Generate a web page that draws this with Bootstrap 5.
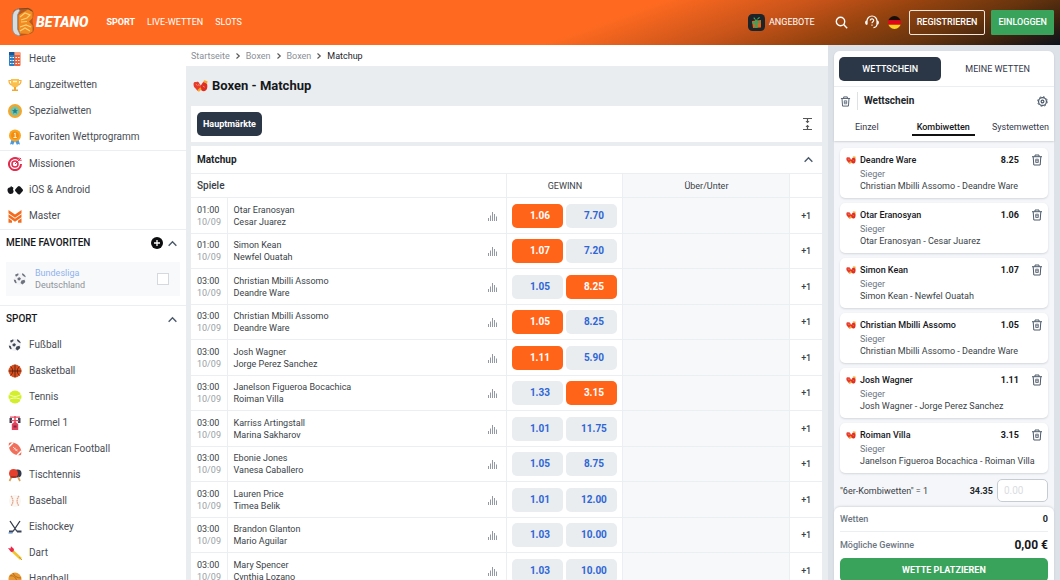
<!DOCTYPE html>
<html lang="de">
<head>
<meta charset="utf-8">
<meta name="viewport" content="width=device-width, initial-scale=1">
<title>Betano – Boxen Matchup</title>
<link href="https://cdn.jsdelivr.net/npm/bootstrap@5.3.0/dist/css/bootstrap.min.css" rel="stylesheet">
<style>
:root{--orange:#ff6419;--navy:#2b3746;--green:#3aa35b;--line:#eceff2;--ink:#16181c;--blue:#2f66d6}
body{font-family:Roboto,"Liberation Sans",sans-serif;font-size:9px;line-height:12px;color:#3a3f47;background:#e9edf0}
a{text-decoration:none;color:inherit}
button{font-family:inherit;line-height:12px}
svg{display:block;flex:none}
.ic{width:14px;height:14px}
.topbar{height:45px;padding:0 6px 1px;color:#fff;background:linear-gradient(160deg,#ff6a20 56%,#c9541a 69%,#96430f 78%,#67340e 87%,#39210f 94%,#0c131c 100%)}
.brand{font-size:14px;line-height:16px;font-weight:900;font-style:italic}
.topnav{gap:12px;margin-left:18px}
.topbtn{height:25px;padding:0 7px;font-size:9px;font-weight:500;color:#fff;border:1px solid #f3e6dc;background:none;border-radius:2px}
.topbtn.login{margin-left:6px;padding:0 6px;background:var(--green);border-color:var(--green);border-radius:1px}
.side{width:186px;padding-top:1px;background:#fff}
.side .entry{height:26px;padding-left:8px;gap:7px;font-size:10px;color:#4a4e55}
.side .group{height:26px;padding:0 8px 0 6px;font-size:10px;font-weight:500;color:var(--ink)}
.rule{border-top:1px solid var(--line)}
.fav{height:34px;margin:6px 6px 9px;padding:0 11px 0 7px;gap:8px;background:#f8f9fb;color:#8d9299}
.fav .tick{width:12px;height:12px;margin:0;border:1px solid #d5d8dc;border-radius:0}
.crumbs{height:21px;padding-left:5px;gap:5px;color:#8a8f96}
.center{padding:0 6px 0 5px}
.title{font-size:13px;line-height:16px;color:var(--ink);height:40px;padding-left:2px;gap:4px}
.panel{background:#fff}
.bar{height:36px;padding:0 8px 0 6px}
.chip{height:24px;padding:0 6px;background:var(--navy);color:#fff;font-size:9px;font-weight:700;border:0;border-radius:5px}
.subhead{font-size:10px;line-height:12px}
.sect{height:27px;padding:0 8px 0 6px}
.games{table-layout:fixed;width:100%;border-collapse:collapse}
.games th{height:24px;font-weight:400;border:solid var(--line);border-width:1px 1px 1px 0;padding:0}
.games th:first-child,.games td:first-child{padding-left:6px}
.games th:last-child,.games td:last-child{border-right:0}
.games td{height:35px;border:solid var(--line);border-width:0 1px 1px 0;padding:0}
.games tr:nth-child(odd) td{height:36px}
.games .shade{background:#f7f8fa}
.games .pair{padding:0 8px 0 6px}
.c-time{width:36px}.c-odds{width:116px}.c-ou{width:167px}.c-more{width:32px}
.odd{width:51px;height:24px;border:0;border-radius:5px;background:#e9edf0;color:var(--blue);font-size:10px;font-weight:700;padding:0 0 0 4px}
.odd.on{background:var(--orange);color:#fff}
.slipcol{width:232px;background:#dde2e9;padding:6px 6px 0}
.slip{background:#f4f6f9;border-radius:6px 6px 0 0}
.slip .head{padding-bottom:5px;background:#fff;border-radius:6px 6px 0 0;box-shadow:0 1px 2px rgba(60,70,90,.2)}
.pills{height:35px;padding:0 5px;gap:5px}
.pill{flex:1;height:24px;border:0;border-radius:5px;font-size:9px;background:none;color:#33384a}
.pill.on{background:var(--navy);color:#fff;font-weight:500}
.slipbar{height:29px;padding:0 6px;gap:6px}
.kind{background:none;border:0;border-bottom:2px solid transparent;padding:0 5px 1px;height:16px;font-size:9px;color:#33384a}
.kind.on{border-color:#111;font-weight:500;color:var(--ink)}
.bet{height:50px;margin-bottom:5px;padding:6px 5px 0 6px;background:#fff;border-radius:5px;box-shadow:0 1px 2px rgba(60,70,90,.18)}
.bet .who{font-weight:500;color:var(--ink)}
.bet .ic{width:10px;height:10px}
.bet .info{padding:2px 0 0 14px}
.ghost{border:0;background:none;padding:0;color:#4d5a6b}
.muted{color:#6c7683}
.stake{width:51px;height:23px;padding:0 6px;font-size:10px;border:1px solid #c6ccd4;border-radius:5px;background:#fff}
.stake::placeholder{color:#dadde2}
.foot{background:#fff;border-radius:6px 6px 0 0;padding:0 6px;box-shadow:0 -1px 2px rgba(60,70,90,.15)}
.place{height:24px;width:100%;border:0;border-radius:5px;background:var(--green);color:#fff;font-size:9px;font-weight:700}
.sum{font-size:12px;font-weight:700;color:var(--ink)}
</style>
</head>
<body class="vh-100 overflow-hidden d-flex flex-column">

<svg width="0" height="0" class="position-absolute" aria-hidden="true">
  <symbol id="up" viewBox="0 0 10 10"><path d="M1.500 7 5 3.500 8.500 7" fill="none" stroke="currentColor" stroke-width="1.300"/></symbol>
  <symbol id="next" viewBox="0 0 6 8"><path d="M1.500 1.500 4.300 4 1.500 6.500" fill="none" stroke="#555" stroke-width="1.100"/></symbol>
  <symbol id="trash" viewBox="0 0 12 12"><g fill="none" stroke="currentColor"><path d="M1 2.700h10M4 2.500V1h4v1.500M2.200 3l.6 8h6.400l.6-8"/><path d="M4.700 5.200h2.600v3.300H4.700zM4.700 6.800h2.600" stroke-width=".8"/></g></symbol>
  <symbol id="bars" viewBox="0 0 10 10"><path d="M.5 10V7M2.500 10V4.500M4.500 10V1M6.500 10V3M8.500 10V5.500" stroke="#9299a4" fill="none"/></symbol>
  <symbol id="glove" viewBox="0 0 16 14"><path d="M.6 4.500C.8 2.800 2.200 2.300 3.400 3 4.400 2 6.300 2.500 6.800 4.200L8 6l.6 4-3 2.500C4 12 3.500 10.500 2.500 9.500 1.200 8.300.4 6.500.6 4.500z" fill="#e63a2b"/><path d="M8 6.500C9.500 6 9.600 3.600 11.300 2.800l3 .6c1.300 2 1.200 4.600.6 6.600-.8 2.400-3.600 3.200-5.700 1.800C7.800 10.800 7.500 8 8 6.500z" fill="#df2f20"/><path d="M10.800 2.200 12 .8l3.500 1-.6 3zM4.500 11.500 7.800 8.200l1.400 2.200-2.800 2.800z" fill="#f8a826"/><path d="M3 5 4.800 6.500M10.500 7l2 1.300M6 5l.6 2" stroke="#ff8f70" fill="none"/></symbol>
  <symbol id="ball" viewBox="0 0 14 14"><circle cx="7" cy="7" r="6" fill="#f1f2f5"/><path d="M2 2.800 5.200 1.200 5.500 3 3 4.700zM9 1.300c2 .5 3.300 2 3.800 4L11 4.600 9.200 3zM8.500 8.500l3-.8.8 2.300-2.800 2.500-2-1.500zM.8 7.500 2.700 8l1 3-1 .2C1.500 10.200.9 9 .8 7.500zM4.500 6l2.200-.8L8 6.800 6.500 8.500 4.700 8z" fill="#3f4654"/></symbol>
</svg>

<header class="topbar d-flex align-items-center flex-shrink-0">
  <a href="#" class="d-flex align-items-center ps-1" aria-label="Betano">
    <svg width="26" height="30" viewBox="-1 0 26 30"><path d="M7 1.500 17 1c4 .5 6 3 5.500 7l-1 6 1.500 7c.5 3-1 5-4 6L9 29l-5-2L1 22V8l2-5z" fill="#b85a1e"/><path d="M8 2 5 3C2.500 4.500 1.500 7 1.500 10v11c0 3 1 5 3 6.500L8 29l1-1.500L6.500 22V8L9 3z" fill="#d9dcdd" stroke="#87929a" stroke-width=".8"/><path d="M7.500 8 17 2.500l4.500 2v6.500L18 14.500l3.500 4v6l-4 2.500L9 26.500l-1.500-5z" fill="#f08a22"/><path d="M9 10l5-4 5 2-3 3-6 2M9 20l6-2 5 2M9 24l5-3 5 3M10 15l6-.5" stroke="#ffcf70" fill="none" stroke-width="1.200"/><path d="M8 2l9-.6 4.500 3" stroke="#7a4a2a" fill="none"/></svg>
    <span class="brand">BETANO</span>
  </a>
  <nav class="topnav d-flex">
    <a href="#" class="fw-bold">SPORT</a><a href="#">LIVE-WETTEN</a><a href="#">SLOTS</a>
  </nav>
  <div class="ms-auto d-flex align-items-center">
    <a href="#" class="d-flex align-items-center gap-1 me-3">
      <svg width="17" height="17" viewBox="0 0 17 17"><rect width="17" height="17" rx="4.500" fill="#1c2329"/><path d="M4 7l9-1v7.500L5 14z" fill="#e4601f"/><path d="M7 6h2.500v8H7zM4 8l9-.8v1.400L4 9.400z" fill="#31a661"/><path d="M8 6C5 5 5 3 6.500 3.500L8 6l3-3c1.500 0 1 2-3 3z" fill="#3cab60"/></svg>
      <span>ANGEBOTE</span></a>
    <button class="ghost ms-1 me-3" aria-label="Suche"><svg width="13" height="13" viewBox="0 0 13 13" fill="none" stroke="#fff" stroke-width="1.400"><circle cx="5.500" cy="5.500" r="4.200"/><path d="m8.600 8.600 3.600 3.600"/></svg></button>
    <button class="ghost me-2" aria-label="Hilfe"><svg width="16" height="14" viewBox="0 0 16 14" fill="none" stroke="#fff" stroke-width="1.200"><path d="M3 9.500V6a5 5 0 0 1 10 0v3.500c-.3 2-1.300 3-3.500 3.200M3 5.800C1.200 6 1.200 9.200 3 9.400M13 5.800c1.800.2 1.800 3.400 0 3.600M6.300 5.500c0-2.200 3.500-2 3.400 0C9.600 6.800 8 6.700 8 8.300M8 9.500v1.300"/></svg></button>
    <svg width="13" height="13" viewBox="0 0 13 13" class="me-2"><clipPath id="r"><circle cx="6.500" cy="6.500" r="6.500"/></clipPath><g clip-path="url(#r)"><path fill="#1a0d08" d="M0 0h13v4.300H0z"/><path fill="#e3061a" d="M0 4.300h13v4.400H0z"/><path fill="#ffd21f" d="M0 8.700h13V13H0z"/></g></svg>
    <button class="topbtn">REGISTRIEREN</button>
    <button class="topbtn login">EINLOGGEN</button>
  </div>
</header>

<div class="d-flex flex-grow-1 overflow-hidden">
  <aside class="side flex-shrink-0 overflow-hidden">
    <a href="#" class="entry d-flex align-items-center"><svg class="ic" viewBox="0 0 14 14"><rect x="1" y="0" width="6" height="14" rx="1" fill="#2f7fc4"/><rect x="6.500" y="0" width="6" height="14" rx="1" fill="#f0623a"/><path d="M1 0h5.500v3H1z" fill="#1b5796"/><path d="M6.500 0h5.500v3H6.500z" fill="#f9a07c"/><path d="M2 5.500h1.500M4.500 5.500H6M2 8.500h1.500M4.500 8.500H6M2 11.500h1.500M4.500 11.500H6M7.500 5.500H9M10 5.500h1.500M7.500 8.500H9M10 8.500h1.500M7.500 11.500H9M10 11.500h1.500" stroke="#fff" stroke-width="1"/></svg>Heute</a>
    <a href="#" class="entry d-flex align-items-center"><svg class="ic" viewBox="0 0 14 14"><path d="M3 1h8v4c0 3-2 4.500-4 4.500S3 8 3 5z" fill="#fbc04a"/><path d="M3 2.500H1c0 3 1 4 3 4.500M11 2.500h2c0 3-1 4-3 4.500" stroke="#f5b13c" stroke-width="1.200" fill="none"/><path d="M6 9h2v2.500h2V13H4v-1.500h2z" fill="#f2a735"/><path d="M5 3.500h4" stroke="#fff3c8" stroke-width="1.500"/></svg>Langzeitwetten</a>
    <a href="#" class="entry d-flex align-items-center"><svg class="ic" viewBox="0 0 14 14"><circle cx="7" cy="7" r="7" fill="#f4a62a"/><circle cx="7" cy="7" r="4.500" fill="#6cc5b0"/><path d="m7 4 .9 2 2.100.2-1.600 1.400.5 2.100L7 8.600 5.100 9.700l.5-2.100L4 6.200 6.100 6z" fill="#257f86"/></svg>Spezialwetten</a>
    <a href="#" class="entry d-flex align-items-center"><svg class="ic overflow-visible" viewBox="0 0 14 14"><path d="M4 8 2 14.500l2-.5 1 1 2-4 2 4 1-1 2 .5L10 8z" fill="#4a9be0"/><circle cx="7" cy="5.500" r="6" fill="#f9a51f"/><circle cx="7" cy="5.500" r="3.800" fill="#f58b13"/><path d="M6 4 7.200 3V7M5.500 7.500h3.200" stroke="#fff2c4" fill="none"/></svg>Favoriten Wettprogramm</a>
    <div class="rule"></div>
    <a href="#" class="entry d-flex align-items-center"><svg class="ic" viewBox="0 0 14 14"><g fill="none" stroke="#e12d4d"><path d="M10.500 2.200A6 6 0 1 0 13 7" stroke-width="2"/><circle cx="7" cy="7" r="3" stroke-width="1.500"/><path d="M7 7l6-6M11 .5v2.700h2.700"/></g></svg>Missionen</a>
    <a href="#" class="entry d-flex align-items-center"><svg class="ic overflow-visible" viewBox="0 0 14 14"><path d="M2.500 4C3 2.500 4 3 3.500 4.200 5 3.500 6 5 5 6.500c0 1 .8 1.200.6 2-.6 2-1.600 2.700-2.600 2.200-1 .4-2 .3-3-1.700-1-2.500-.5-4.700 2.500-4.800z" fill="#15171a"/><path d="M11 4.500 13.500 7.300 11 10 8.500 7.300z" fill="#15171a" stroke="#15171a" stroke-width="3" stroke-linejoin="round"/></svg>iOS &amp; Android</a>
    <a href="#" class="entry d-flex align-items-center"><svg class="ic" viewBox="0 0 14 14"><path d="M.5 1 7 5.500 13.500 1v3.200L7 8.700.5 4.200zM.5 5.200 7 9.700l6.500-4.500v3L7 12.700.5 8.200zM.5 9.200 4 11.700v2H.5zM13.500 9.200 10 11.700v2h3.500z" fill="#f56b1c"/></svg>Master</a>
    <div class="rule"></div>
    <div class="group d-flex align-items-center"><span class="me-auto">MEINE FAVORITEN</span>
      <button class="ghost me-1" aria-label="Favorit hinzufügen"><svg width="12" height="12" viewBox="0 0 12 12"><circle cx="6" cy="6" r="6" fill="#0c0d0f"/><path d="M6 3v6M3 6h6" stroke="#fff" stroke-width="1.300"/></svg></button>
      <button class="ghost" aria-label="Einklappen"><svg width="11" height="11"><use href="#up"/></svg></button></div>
    <label class="fav d-flex align-items-center">
      <svg class="ic opacity-75"><use href="#ball"/></svg>
      <span class="me-auto"><span class="d-block" style="color:#8fb2ee">Bundesliga</span>Deutschland</span>
      <input type="checkbox" class="tick form-check-input"></label>
    <div class="rule"></div>
    <div class="group d-flex align-items-center"><span class="me-auto">SPORT</span>
      <button class="ghost" aria-label="Einklappen"><svg width="11" height="11"><use href="#up"/></svg></button></div>
    <a href="#" class="entry d-flex align-items-center"><svg class="ic"><use href="#ball"/></svg>Fußball</a>
    <a href="#" class="entry d-flex align-items-center"><svg class="ic" viewBox="0 0 14 14"><circle cx="7" cy="7" r="6.500" fill="#d9501e"/><path d="M7 .5v13M.5 7h13M2.500 2.500c3 2.500 3 6.500 0 9M11.500 2.500c-3 2.500-3 6.500 0 9" stroke="#4b1c10" stroke-width=".8" fill="none"/></svg>Basketball</a>
    <a href="#" class="entry d-flex align-items-center"><svg class="ic" viewBox="0 0 14 14"><circle cx="7" cy="7" r="6.500" fill="#d3ee2b"/><path d="M1 4.500c4 2.500 8 2.500 12 0M1 9.500c4-2 8-2 12 0" stroke="#f5ffc0" fill="none"/></svg>Tennis</a>
    <a href="#" class="entry d-flex align-items-center"><svg class="ic" viewBox="0 0 14 14"><path d="M1.500 2H4v5H1.500zM10 2h2.500v5H10z" fill="#3b4254"/><path d="M2 .5h10v1.300H2zM3 4h8v1.200H3z" fill="#e84a5f"/><path d="M6.300 0h1.400v6l2.500 2v6H3.800V8l2.500-2z" fill="#e2435c"/><path d="M5.500 9.500h3v2h-3z" fill="#7d2740"/></svg>Formel 1</a>
    <a href="#" class="entry d-flex align-items-center"><svg class="ic" viewBox="0 0 14 14"><path d="M1 1C5-.3 9 1.500 11 4c2.200 2.500 2.800 5.500 2 9-4 .8-7.500-.5-9.500-3C1 7.500.3 4 1 1z" fill="#f0705c"/><path d="M.7 5 5 .8M9 13.300 13.300 9" stroke="#fff" stroke-width="1.600"/><path d="M5 5l4.500 4M6 7.500l1.500-1.700M7.600 9l1.500-1.700" stroke="#fde0da"/></svg>American Football</a>
    <a href="#" class="entry d-flex align-items-center"><svg class="ic" viewBox="0 0 14 14"><circle cx="9.500" cy="5.500" r="4" fill="#34394a"/><circle cx="5.500" cy="5.500" r="4.500" fill="#e5402c"/><path d="M3.500 9 1.500 13M10 9l2 4" stroke="#d9a05c" stroke-width="1.700"/><path d="M2.500 9h6" stroke="#8c2b20" stroke-width="1.300"/></svg>Tischtennis</a>
    <a href="#" class="entry d-flex align-items-center"><svg class="ic" viewBox="0 0 14 14"><circle cx="7" cy="7" r="6" fill="#faf6f1"/><path d="M3 2c2.500 3 2.500 7 0 10M11 2c-2.500 3-2.500 7 0 10" stroke="#e3a58f" fill="none" stroke-width="1.300" stroke-dasharray="1.600 .6"/></svg>Baseball</a>
    <a href="#" class="entry d-flex align-items-center"><svg class="ic" viewBox="0 0 14 14"><path d="M2 1l7 10.500M12 1 5 11.500" stroke="#333a48" stroke-width="1.300"/><path d="M9 11.500h4.500M5 11.500H1" stroke="#39435a" stroke-width="2"/><path d="M.5 13h4" stroke="#4a86c8"/></svg>Eishockey</a>
    <a href="#" class="entry d-flex align-items-center"><svg class="ic" viewBox="0 0 14 14"><path d="M4 4.500 13 13" stroke="#f2c52e" stroke-width="2.600"/><path d="M11 11l3 3" stroke="#c9a13a"/><path d="M0 2 2.500 2.500 3 .2 6 3 5.500 5.500 3 6z" fill="#e8274b"/></svg>Dart</a>
    <a href="#" class="entry d-flex align-items-center"><svg class="ic" viewBox="0 0 14 14"><circle cx="7" cy="7" r="6.500" fill="#e89a35"/><path d="M1.500 4c4-1 7 1 8 8M5 1c1 3 4 5 8 5" stroke="#b96b1c" fill="none"/></svg>Handball</a>
  </aside>

  <main class="flex-grow-1 overflow-hidden">
    <nav class="crumbs panel d-flex align-items-center" aria-label="Brotkrumen">
      <a href="#">Startseite</a><svg width="6" height="8"><use href="#next"/></svg><a href="#">Boxen</a><svg width="6" height="8"><use href="#next"/></svg><a href="#">Boxen</a><svg width="6" height="8"><use href="#next"/></svg><span class="text-dark">Matchup</span>
    </nav>
    <div class="center">
      <h1 class="title d-flex align-items-center m-0 fw-bold"><svg width="15" height="14"><use href="#glove"/></svg>Boxen - Matchup</h1>
      <div class="bar panel d-flex align-items-center justify-content-between mb-1">
        <button class="chip">Hauptmärkte</button>
        <button class="ghost" aria-label="Alle einklappen"><svg width="12" height="14" viewBox="0 0 12 14"><path d="M1 1.500h9M1 12.500h9M5.500 2v3.500M5.500 8.500V12" stroke="#555" stroke-width="1.200"/><path d="M3.500 4h4l-2 2.300zM3.500 10h4l-2-2.300z" fill="#555"/></svg></button>
      </div>
      <section class="panel">
        <div class="sect d-flex align-items-center justify-content-between">
          <h2 class="subhead m-0 fw-bold text-dark">Matchup</h2>
          <button class="ghost" aria-label="Einklappen"><svg width="11" height="11"><use href="#up"/></svg></button>
        </div>
        <table class="games">
          <colgroup><col class="c-time"><col><col class="c-odds"><col class="c-ou"><col class="c-more"></colgroup>
          <thead><tr>
            <th colspan="2" scope="col"><span class="subhead fw-medium">Spiele</span></th>
            <th scope="col" class="text-center">GEWINN</th><th scope="col" class="text-center shade">Über/Unter</th><th></th></tr></thead>
          <tbody id="games"></tbody>
        </table>
      </section>
    </div>
  </main>

  <aside class="slipcol flex-shrink-0 overflow-hidden">
    <div class="slip">
      <div class="head">
        <div class="pills d-flex align-items-center">
          <button class="pill on">WETTSCHEIN</button><button class="pill">MEINE WETTEN</button>
        </div>
        <div class="slipbar rule d-flex align-items-center">
          <button class="ghost" aria-label="Wettschein leeren"><svg width="11" height="11"><use href="#trash"/></svg></button>
          <div class="border-start" style="height:18px"></div>
          <span class="subhead fw-bold text-dark me-auto">Wettschein</span>
          <button class="ghost" aria-label="Einstellungen"><svg width="11" height="11" viewBox="0 0 12 12" fill="none" stroke="currentColor"><circle cx="6" cy="6" r="4.300" stroke-width="1.300"/><circle cx="6" cy="6" r="1.500" stroke-width="1.300"/><circle cx="6" cy="6" r="5.300" stroke-dasharray="2 2.160"/></svg></button>
        </div>
        <div class="d-flex align-items-end justify-content-between ps-3" style="height:21px">
          <button class="kind">Einzel</button><button class="kind on ms-3">Kombiwetten</button><button class="kind">Systemwetten</button>
        </div>
      </div>
      <div style="padding:7px 6px 0">
        <div id="bets"></div>
        <div class="d-flex align-items-center" style="padding:1px 0 5px">
          <label for="stake" class="me-auto">"6er-Kombiwetten" = 1</label><span class="fw-bold me-1 text-dark">34.35</span>
          <input id="stake" class="stake" type="text" placeholder="0.00">
        </div>
      </div>
      <div class="foot">
        <div class="d-flex align-items-center justify-content-between" style="height:24px"><span class="muted fw-medium">Wetten</span><span class="fw-bold text-dark">0</span></div>
        <div class="rule d-flex align-items-center justify-content-between" style="height:27px"><span class="muted fw-medium">Mögliche Gewinne</span><span class="sum">0,00 €</span></div>
        <button class="place">WETTE PLATZIEREN</button>
      </div>
    </div>
  </aside>
</div>

<script src="https://cdn.jsdelivr.net/npm/bootstrap@5.3.0/dist/js/bootstrap.bundle.min.js"></script>
<script>
// time, first fighter, second fighter, odds 1, odds 2, picked side (0 = none)
const games = [
  ['01:00','Otar Eranosyan','Cesar Juarez','1.06','7.70',1],
  ['01:00','Simon Kean','Newfel Ouatah','1.07','7.20',1],
  ['03:00','Christian Mbilli Assomo','Deandre Ware','1.05','8.25',2],
  ['03:00','Christian Mbilli Assomo','Deandre Ware','1.05','8.25',1],
  ['03:00','Josh Wagner','Jorge Perez Sanchez','1.11','5.90',1],
  ['03:00','Janelson Figueroa Bocachica','Roiman Villa','1.33','3.15',2],
  ['03:00','Karriss Artingstall','Marina Sakharov','1.01','11.75',0],
  ['03:00','Ebonie Jones','Vanesa Caballero','1.05','8.75',0],
  ['03:00','Lauren Price','Timea Belik','1.01','12.00',0],
  ['03:00','Brandon Glanton','Mario Aguilar','1.03','10.00',0],
  ['03:00','Mary Spencer','Cynthia Lozano','1.03','10.00',0]
];
document.getElementById('games').innerHTML = games.map(([t,a,b,x,y,p]) => `<tr>
  <td>${t}<br><span style="color:#9a9fa6">10/09</span></td>
  <td><div class="pair d-flex align-items-center justify-content-between"><span>${a}<br>${b}</span><svg width="10" height="10"><use href="#bars"/></svg></div></td>
  <td><div class="d-flex justify-content-center" style="gap:3px"><button class="odd ${p===1?'on':''}">${x}</button><button class="odd ${p===2?'on':''}">${y}</button></div></td>
  <td class="shade"></td><td class="text-center"><a href="#" class="fw-medium">+1</a></td></tr>`).join('');

const bets = [
  ['Deandre Ware','8.25','Christian Mbilli Assomo - Deandre Ware'],
  ['Otar Eranosyan','1.06','Otar Eranosyan - Cesar Juarez'],
  ['Simon Kean','1.07','Simon Kean - Newfel Ouatah'],
  ['Christian Mbilli Assomo','1.05','Christian Mbilli Assomo - Deandre Ware'],
  ['Josh Wagner','1.11','Josh Wagner - Jorge Perez Sanchez'],
  ['Roiman Villa','3.15','Janelson Figueroa Bocachica - Roiman Villa']
];
document.getElementById('bets').innerHTML = bets.map(([w,o,m]) => `<article class="bet">
  <div class="d-flex align-items-center gap-1"><svg class="ic"><use href="#glove"/></svg><span class="who me-auto">${w}</span><span class="who fw-bold me-2">${o}</span>
  <button class="ghost" aria-label="Wette entfernen"><svg width="12" height="12"><use href="#trash"/></svg></button></div>
  <div class="info"><div class="muted">Sieger</div>${m}</div></article>`).join('');
</script>
</body>
</html>
